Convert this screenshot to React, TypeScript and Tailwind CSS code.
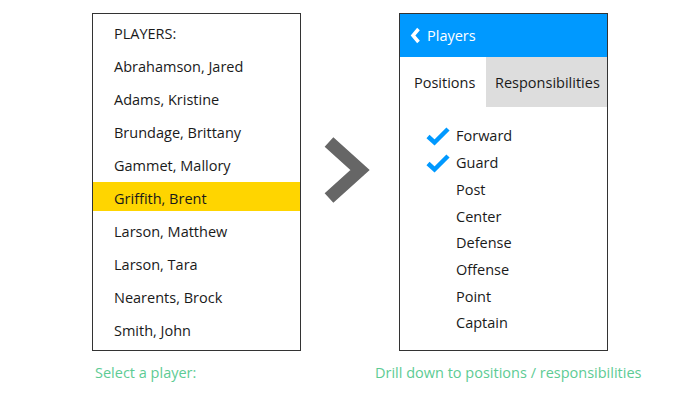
import React from 'react';

const players = [
  'Abrahamson, Jared',
  'Adams, Kristine',
  'Brundage, Brittany',
  'Gammet, Mallory',
  'Griffith, Brent',
  'Larson, Matthew',
  'Larson, Tara',
  'Nearents, Brock',
  'Smith, John',
];

const positions = [
  { name: 'Forward', checked: true },
  { name: 'Guard', checked: true },
  { name: 'Post', checked: false },
  { name: 'Center', checked: false },
  { name: 'Defense', checked: false },
  { name: 'Offense', checked: false },
  { name: 'Point', checked: false },
  { name: 'Captain', checked: false },
];

const Check = () => (
  <svg width="24" height="20" viewBox="0 0 24 20" className="shrink-0">
    <path d="M2 10.5 L8.5 16.5 L22 3" fill="none" stroke="#0099ff" strokeWidth="4.5" strokeLinejoin="miter" />
  </svg>
);

const App: React.FC = () => {
  return (
    <div
      className="w-[700px] h-[406px] bg-white text-[#1a1a1a] text-[14.5px] overflow-hidden"
      style={{ fontFamily: '"Open Sans", "Noto Sans", sans-serif' }}
    >
      <div className="flex pt-[13px] pl-[92px]">
        {/* player list */}
        <div className="flex flex-col">
          <div className="w-[209px] h-[338px] border border-[#333] pt-[1px]">
            <div className="h-[33px] flex items-center pl-[21px] pt-[4px]">PLAYERS:</div>
            {players.map((p) => (
              <div key={p} className="h-[33px] flex items-center">
                <div
                  className={`w-full h-[29px] flex items-center pl-[21px] pt-[4px] ${
                    p === 'Griffith, Brent' ? 'bg-[#ffd500]' : ''
                  }`}
                >
                  {p}
                </div>
              </div>
            ))}
          </div>
          <div className="pl-[3px] pt-[11px] text-[#5dcb94]">Select a player:</div>
        </div>

        {/* arrow */}
        <div className="w-[98px] flex justify-center pt-[124px]">
          <svg width="46" height="66" viewBox="0 0 46 66" className="ml-[-6px]">
            <path d="M5 5 L36 33 L5 61" fill="none" stroke="#666666" strokeWidth="13" strokeLinejoin="miter" />
          </svg>
        </div>

        {/* drill-down panel */}
        <div className="flex flex-col">
          <div className="w-[209px] h-[338px] border border-[#333] flex flex-col">
            <div className="h-[43px] bg-[#0099ff] text-white flex items-center pl-[10px] gap-[6px]">
              <svg width="11" height="17" viewBox="0 0 11 17">
                <path d="M8.5 2 L3 8.5 L8.5 15" fill="none" stroke="#ffffff" strokeWidth="3.5" />
              </svg>
              <span>Players</span>
            </div>
            <div className="h-[50px] flex">
              <div className="w-[86px] flex items-center pl-[14px] pt-[2px]">Positions</div>
              <div className="flex-1 bg-[#dddddd] flex items-center pl-[9px] pt-[2px]">Responsibilities</div>
            </div>
            <div className="pt-[16px] flex flex-col">
              {positions.map((pos) => (
                <div key={pos.name} className="h-[26.7px] flex items-center">
                  <div className="w-[56px] flex justify-end pr-[6px]">{pos.checked && <Check />}</div>
                  <span>{pos.name}</span>
                </div>
              ))}
            </div>
          </div>
          <div className="pt-[11px] text-[#5dcb94] ml-[-24px]">
            Drill down to positions / responsibilities
          </div>
        </div>
      </div>
    </div>
  );
};

export default App;
